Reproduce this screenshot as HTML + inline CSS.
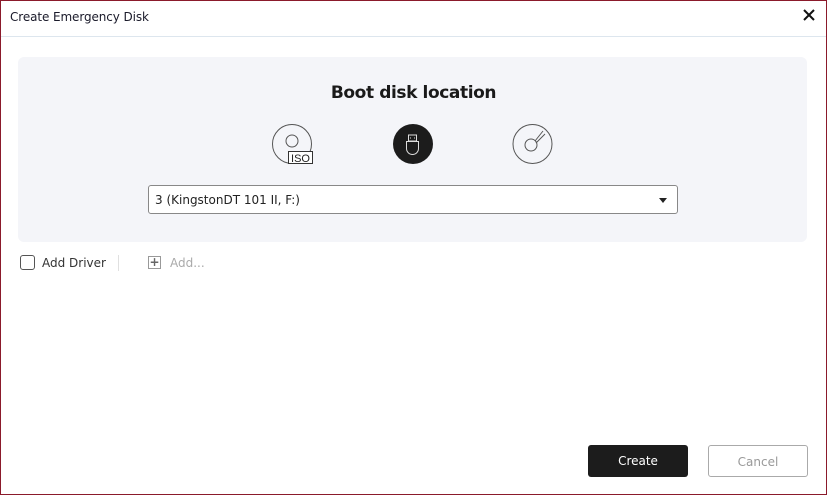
<!DOCTYPE html><html><head><style>
*{margin:0;padding:0;box-sizing:border-box}
body{width:827px;height:495px;overflow:hidden;background:#fff;font-family:"DejaVu Sans","Liberation Sans",sans-serif;position:relative}
.frame{position:absolute;inset:0;border:1px solid #8b1a2b}
.title{position:absolute;left:10px;top:10px;font-size:12px;color:#1a1a2a;letter-spacing:-0.1px}
.close{position:absolute;right:12px;top:9px}
.hr{position:absolute;left:1px;right:1px;top:36px;height:1px;background:#dde6ee}
.panel{position:absolute;left:18px;top:57px;width:789px;height:185px;background:#f4f5f9;border-radius:6px}
h1{position:absolute;left:0;right:0;top:83px;text-align:center;font-size:17px;font-weight:bold;color:#1a1a1a;letter-spacing:-0.4px}
.sel{position:absolute;left:148px;top:185px;width:530px;height:29px;border:1px solid #888;border-radius:3px;background:#fff;font-size:12px;color:#222;padding:7px 6px}
.arr{position:absolute;right:10px;top:12px;border:4px solid transparent;border-top:5px solid #222}
.cb{position:absolute;left:20px;top:255px;width:15px;height:15px;border:1.5px solid #555;border-radius:3px}
.t{position:absolute;font-size:12px}
.btn{position:absolute;top:445px;width:100px;height:32px;border-radius:3px;font-size:12px;text-align:center;line-height:32px}
</style></head><body>
<div class="frame"></div>
<div class="title">Create Emergency Disk</div>
<svg class="close" width="12" height="12"><path d="M1 1L11 11M11 1L1 11" stroke="#111" stroke-width="2"/></svg>
<div class="hr"></div>
<div class="panel"></div>
<h1>Boot disk location</h1>
<svg style="position:absolute;left:272px;top:124px" width="45" height="42"><circle cx="20" cy="20" r="19.5" fill="none" stroke="#555"/><circle cx="20" cy="17" r="6" fill="none" stroke="#555"/><rect x="16.5" y="27.5" width="24" height="12" fill="#fff" stroke="#333"/><text x="28.5" y="38" font-size="11" text-anchor="middle" font-family="Liberation Sans" fill="#222">ISO</text></svg>
<svg style="position:absolute;left:393px;top:124px" width="40" height="40"><circle cx="20" cy="20" r="20" fill="#1c1c1c"/><rect x="15.5" y="11" width="8" height="6" fill="none" stroke="#ddd"/><path d="M17.5 13.5v1M21.5 13.5v1" stroke="#ddd"/><path d="M13.5 17.5h12v7a6 6 0 0 1-12 0z" fill="none" stroke="#ddd"/></svg>
<svg style="position:absolute;left:512px;top:124px" width="42" height="42"><circle cx="20.5" cy="20" r="19.5" fill="none" stroke="#555"/><circle cx="19" cy="21" r="6" fill="none" stroke="#555"/><path d="M23 17L31 7M24 19L33 10" stroke="#555"/></svg>
<div class="sel">3 (KingstonDT 101 II, F:)<span class="arr"></span></div>
<div class="cb"></div>
<div class="t" style="left:42px;top:256px;color:#333">Add Driver</div>
<div style="position:absolute;left:118px;top:255px;width:1px;height:16px;background:#e0e0e0"></div>
<div style="position:absolute;left:148px;top:256px;width:13px;height:13px;border:1px solid #999;font-size:12px;line-height:11px;text-align:center;color:#666;font-weight:bold">+</div>
<div class="t" style="left:170px;top:256px;color:#aaa">Add...</div>
<div class="btn" style="left:588px;background:#1c1c1c;color:#fff">Create</div>
<div class="btn" style="left:708px;border:1px solid #aaa;color:#999">Cancel</div>
</body></html>
